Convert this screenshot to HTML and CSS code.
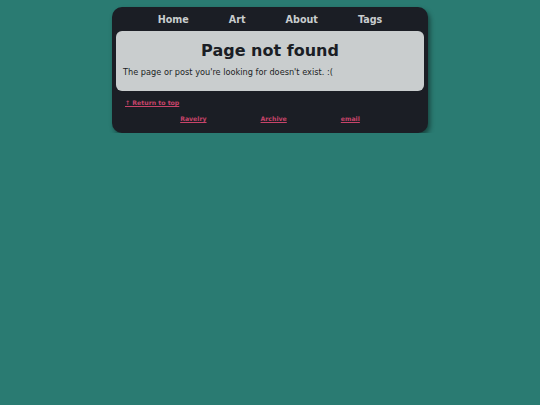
FILE: index.html
```html
<!DOCTYPE html>
<html lang="en">
<head>
<meta charset="utf-8">
<title>Page not found</title>
<link rel="stylesheet" href="styles.css">
</head>
<body>
<div class="wrap">
  <nav class="nav">
    <a href="#">Home</a>
    <a href="#">Art</a>
    <a href="#">About</a>
    <a href="#">Tags</a>
  </nav>
  <main class="card">
    <h1 class="title">Page not found</h1>
    <p class="text">The page or post you're looking for doesn't exist. :(</p>
  </main>
  <div class="totop"><a href="#">↑ Return to top</a></div>
  <footer class="foot">
    <a href="#">Ravelry</a>
    <a href="#">Archive</a>
    <a href="#">email</a>
  </footer>
</div>
</body>
</html>
```
FILE: styles.css
```css
html, body {
  margin: 0;
  padding: 0;
  background: #2a7b72;
  font-family: "DejaVu Sans", Verdana, sans-serif;
}
body {
  padding-top: 7px;
}
.wrap {
  width: 316px;
  margin: 0 auto;
  background: #1b1e25;
  border-radius: 10px;
  box-shadow: 2px 3px 5px rgba(0, 0, 0, 0.45);
  padding: 0 4px 9px;
  box-sizing: border-box;
}
.nav {
  display: flex;
  justify-content: center;
  gap: 40px;
  height: 24px;
  align-items: center;
}
.nav a {
  color: #c9cdce;
  font-weight: bold;
  font-size: 9.6px;
  text-decoration: none;
}
.card {
  background: #c9cdce;
  border-radius: 6px;
  padding: 9px 7px 13px;
  height: 60px;
  box-sizing: border-box;
}
.title {
  margin: 0;
  text-align: center;
  font-size: 16px;
  line-height: 22px;
  font-weight: bold;
  color: #1b1e25;
}
.text {
  margin: 5px 0 0;
  font-size: 8.2px;
  line-height: 10px;
  color: #1b1e25;
}
.totop {
  padding: 4px 9px 0;
  height: 10px;
  line-height: 10px;
}
.totop a, .foot a {
  color: #c8446a;
  font-weight: bold;
  font-size: 6.2px;
  text-decoration: underline;
}
.foot {
  display: flex;
  justify-content: center;
  gap: 54px;
  padding-top: 9px;
  height: 10px;
  line-height: 10px;
}
```
